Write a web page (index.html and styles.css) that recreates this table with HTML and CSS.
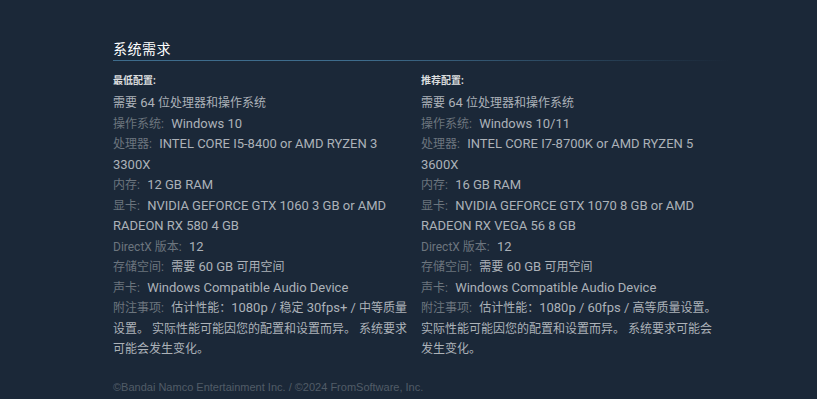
FILE: index.html
```html
<!DOCTYPE html>
<html lang="zh-CN">
<head>
<meta charset="utf-8">
<title>系统需求</title>
<link rel="stylesheet" href="styles.css">
</head>
<body>
<div class="page">
  <h2 class="title">系统需求</h2>
  <div class="cols">
    <div class="col">
      <div class="col-head">最低配置:</div>
      <ul class="reqs">
        <li><span class="zh">需要</span> 64 <span class="zh">位处理器和操作系统</span></li>
        <li><span class="lbl">操作系统:</span> Windows 10</li>
        <li><span class="lbl">处理器:</span> INTEL CORE I5-8400 or AMD RYZEN 3 3300X</li>
        <li><span class="lbl">内存:</span> 12 GB RAM</li>
        <li><span class="lbl">显卡:</span> NVIDIA GEFORCE GTX 1060 3 GB or AMD RADEON RX 580 4 GB</li>
        <li><span class="lbl">DirectX 版本:</span> 12</li>
        <li><span class="lbl">存储空间:</span> <span class="zh">需要</span> 60 GB <span class="zh">可用空间</span></li>
        <li><span class="lbl">声卡:</span> Windows Compatible Audio Device</li>
        <li><span class="lbl">附注事项:</span> <span class="zh">估计性能：</span>1080p / <span class="zh">稳定</span> 30fps+ / <span class="zh">中等质量设置。 实际性能可能因您的配置和设置而异。 系统要求可能会发生变化。</span></li>
      </ul>
    </div>
    <div class="col">
      <div class="col-head">推荐配置:</div>
      <ul class="reqs">
        <li><span class="zh">需要</span> 64 <span class="zh">位处理器和操作系统</span></li>
        <li><span class="lbl">操作系统:</span> Windows 10/11</li>
        <li><span class="lbl">处理器:</span> INTEL CORE I7-8700K or AMD RYZEN 5 3600X</li>
        <li><span class="lbl">内存:</span> 16 GB RAM</li>
        <li><span class="lbl">显卡:</span> NVIDIA GEFORCE GTX 1070 8 GB or AMD RADEON RX VEGA 56 8 GB</li>
        <li><span class="lbl">DirectX 版本:</span> 12</li>
        <li><span class="lbl">存储空间:</span> <span class="zh">需要</span> 60 GB <span class="zh">可用空间</span></li>
        <li><span class="lbl">声卡:</span> Windows Compatible Audio Device</li>
        <li><span class="lbl">附注事项:</span> <span class="zh">估计性能：</span>1080p / 60fps / <span class="zh">高等质量设置。 实际性能可能因您的配置和设置而异。 系统要求可能会发生变化。</span></li>
      </ul>
    </div>
  </div>
  <div class="footer">©Bandai Namco Entertainment Inc. / ©2024 FromSoftware, Inc.</div>
</div>
</body>
</html>
```
FILE: styles.css
```css
body {
  margin: 0;
  background: #1b2838;
  font-family: Roboto, "Noto Sans CJK SC", sans-serif;
}

.page {
  width: 616px;
  padding: 39px 0 0 113px;
}

.title {
  margin: 0;
  padding-bottom: 2px;
  font-family: Roboto, "Noto Sans CJK SC", sans-serif;
  font-size: 14px;
  font-weight: normal;
  line-height: 20px;
  letter-spacing: 0.5px;
  color: #ffffff;
  background: linear-gradient(to right, #3e6c8c 0%, #3e6c8c 40%, rgba(62, 108, 140, 0) 100%) left bottom / 100% 1px no-repeat;
}

.cols {
  display: flex;
  gap: 8px;
  margin-top: 12px;
}

.col {
  width: 300px;
}

.col-head {
  font-size: 10px;
  font-weight: bold;
  line-height: 16px;
  color: #dcdedf;
}

.reqs {
  margin: 4px 0 0;
  padding: 0;
  list-style: none;
  font-size: 13px;
  line-height: 20.5px;
  color: #acb2b8;
}

.zh {
  font-size: 12px;
}

.lbl {
  margin-right: 4px;
  font-size: 12px;
  color: #6c757e;
}

.footer {
  margin-top: 20px;
  font-family: "Liberation Sans", Arial, sans-serif;
  font-size: 11px;
  line-height: 14px;
  color: #515c67;
}
```
